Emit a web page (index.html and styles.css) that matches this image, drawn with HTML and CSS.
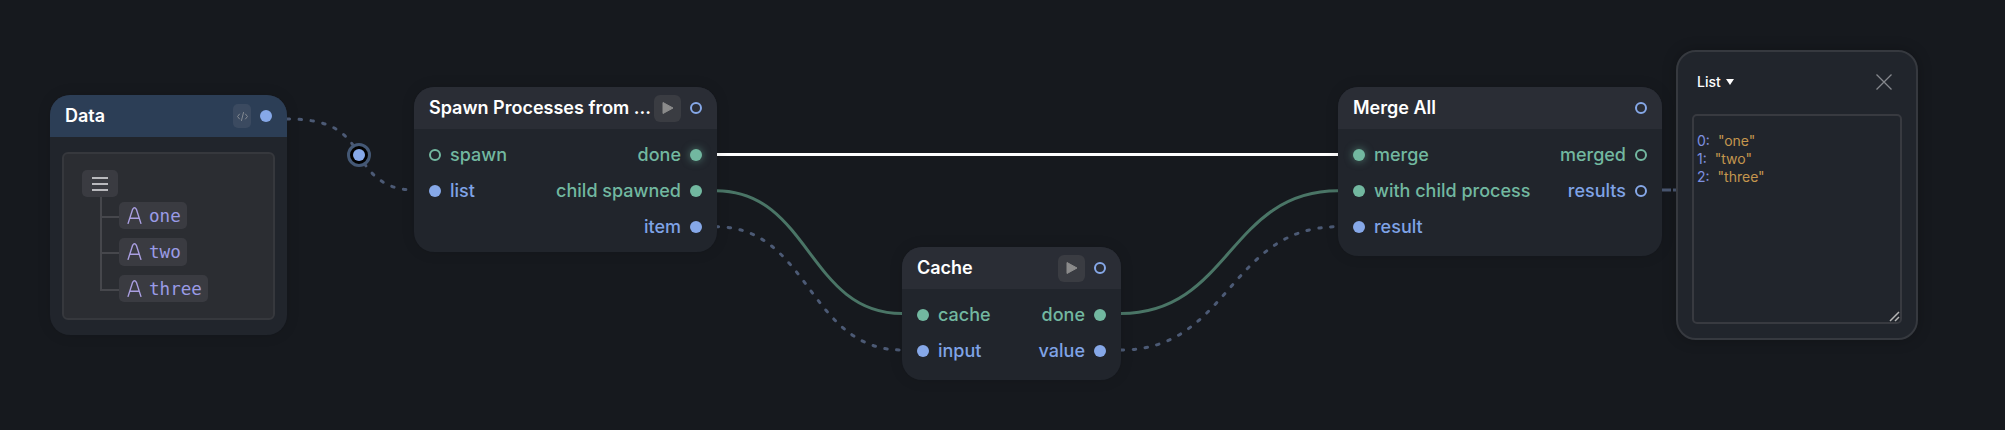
FILE: index.html
```html
<!DOCTYPE html>
<html lang="en">
<head>
<meta charset="utf-8">
<title>Graph</title>
<link rel="stylesheet" href="styles.css">
</head>
<body>
<main class="canvas">
  <svg class="wires" width="2005" height="430" viewBox="0 0 2005 430" fill="none">
    <path class="wire-data" d="M287 119C325 119 345 128 359 155C373 180 390 190 414 190"/>
    <path class="wire-exec" d="M716 154.500H1338"/>
    <path class="wire-green" d="M716 190.700C810 190.700 808 313.500 902 313.500"/>
    <path class="wire-data" d="M716 226.700C810 226.700 808 350 902 350"/>
    <path class="wire-green" d="M1121 313.500C1230 313.500 1229 190.700 1338 190.700"/>
    <path class="wire-data" d="M1121 350C1230 350 1229 226.700 1338 226.700"/>
    <path class="wire-solid" d="M1662 190H1676"/>
  </svg>

  <div class="reroute"><span class="reroute-dot"></span></div>

  <section class="node node-data">
    <header class="node-head head-blue">
      <h2 class="title">Data</h2>
      <button class="code-btn" type="button">
        <svg width="11" height="11" viewBox="0 0 10 10" fill="none"><path d="M2.500 2.500L.5 5l2 2.500M7.500 2.500l2 2.500-2 2.500M6 1L4 9" stroke="#8d9299" stroke-width=".8"/></svg>
      </button>
      <span class="port blue"></span>
    </header>
    <div class="data-body">
      <div class="tree-panel">
        <div class="chip root-chip">
          <svg width="16" height="14" viewBox="0 0 16 14" fill="none"><path d="M0 1h16M0 7h16M0 13h16" stroke="#e4e4e6" stroke-width="1.300"/></svg>
        </div>
        <ul class="tree">
          <li class="tree-row"><div class="chip str-chip"><svg class="a-icon" width="15" height="20" viewBox="0 0 16 20" fill="none"><path d="M1 19.500L6 4Q8 .5 10 4L15 19.500M3 13.500H13" stroke="#a99ee0" stroke-width="1.500"/></svg><span class="str">one</span></div></li>
          <li class="tree-row"><div class="chip str-chip tall"><svg class="a-icon" width="15" height="20" viewBox="0 0 16 20" fill="none"><path d="M1 19.500L6 4Q8 .5 10 4L15 19.500M3 13.500H13" stroke="#a99ee0" stroke-width="1.500"/></svg><span class="str">two</span></div></li>
          <li class="tree-row"><div class="chip str-chip"><svg class="a-icon" width="15" height="20" viewBox="0 0 16 20" fill="none"><path d="M1 19.500L6 4Q8 .5 10 4L15 19.500M3 13.500H13" stroke="#a99ee0" stroke-width="1.500"/></svg><span class="str">three</span></div></li>
        </ul>
      </div>
    </div>
  </section>

  <section class="node node-spawn">
    <header class="node-head">
      <h2 class="title">Spawn Processes from ...</h2>
      <button class="play-btn" type="button"><svg width="12" height="14" viewBox="0 0 12 14"><path d="M1 1.500V12.500L11 7Z" fill="#8b8b8b" stroke="#8b8b8b" stroke-width="1" stroke-linejoin="round"/></svg></button>
      <span class="port ring-blue"></span>
    </header>
    <div class="ports">
      <div class="col">
        <div class="row"><span class="port ring-green"></span><span class="lbl green-t">spawn</span></div>
        <div class="row"><span class="port blue"></span><span class="lbl blue-t">list</span></div>
      </div>
      <div class="col end">
        <div class="row"><span class="lbl green-t">done</span><span class="port green glow"></span></div>
        <div class="row"><span class="lbl green-t">child spawned</span><span class="port green"></span></div>
        <div class="row"><span class="lbl blue-t">item</span><span class="port blue"></span></div>
      </div>
    </div>
  </section>

  <section class="node node-cache">
    <header class="node-head">
      <h2 class="title">Cache</h2>
      <button class="play-btn" type="button"><svg width="12" height="14" viewBox="0 0 12 14"><path d="M1 1.500V12.500L11 7Z" fill="#8b8b8b" stroke="#8b8b8b" stroke-width="1" stroke-linejoin="round"/></svg></button>
      <span class="port ring-blue"></span>
    </header>
    <div class="ports">
      <div class="col">
        <div class="row"><span class="port green"></span><span class="lbl green-t">cache</span></div>
        <div class="row"><span class="port blue"></span><span class="lbl blue-t">input</span></div>
      </div>
      <div class="col end">
        <div class="row"><span class="lbl green-t">done</span><span class="port green"></span></div>
        <div class="row"><span class="lbl blue-t">value</span><span class="port blue"></span></div>
      </div>
    </div>
  </section>

  <section class="node node-merge">
    <header class="node-head">
      <h2 class="title">Merge All</h2>
      <span class="port ring-blue"></span>
    </header>
    <div class="ports">
      <div class="col">
        <div class="row"><span class="port green glow"></span><span class="lbl green-t">merge</span></div>
        <div class="row"><span class="port green"></span><span class="lbl green-t">with child process</span></div>
        <div class="row"><span class="port blue"></span><span class="lbl blue-t">result</span></div>
      </div>
      <div class="col end">
        <div class="row"><span class="lbl green-t">merged</span><span class="port ring-green"></span></div>
        <div class="row"><span class="lbl blue-t">results</span><span class="port ring-blue"></span></div>
      </div>
    </div>
  </section>

  <aside class="inspector">
    <header class="insp-head">
      <span class="insp-title">List</span>
      <span class="caret"></span>
      <svg class="close" width="16" height="16" viewBox="0 0 16 16" fill="none"><path d="M.5.500l15 15M15.500.5l-15 15" stroke="#85888d" stroke-width="1.300"/></svg>
    </header>
    <div class="insp-box">
      <div class="kv"><span class="k">0:</span><span class="v">"one"</span></div>
      <div class="kv"><span class="k">1:</span><span class="v">"two"</span></div>
      <div class="kv"><span class="k">2:</span><span class="v">"three"</span></div>
      <svg class="grip" width="11" height="11" viewBox="0 0 11 11" fill="none"><path d="M1 10L10 1M6 10L10 6" stroke="#b5b5b5" stroke-width="1.500"/></svg>
    </div>
  </aside>
</main>
</body>
</html>
```
FILE: styles.css
```css
* { box-sizing: border-box; }
html, body { margin: 0; padding: 0; background: #16191e; overflow: hidden; }
.canvas {
  position: relative;
  width: 2005px;
  height: 430px;
  background: #16191e;
  font-family: Inter, "Liberation Sans", sans-serif;
  color: #fff;
}
.wires { position: absolute; left: 0; top: 0; }
.wires path { stroke-width: 3px; }
.wire-data { stroke: #4c5a75; stroke-dasharray: 2.500 9.500; stroke-linecap: round; }
.wire-solid { stroke: #4c5a75; stroke-dasharray: 9 2 3 2; }
.wire-exec { stroke: #fff; }
.wire-green { stroke: #4a7566; }

.reroute {
  position: absolute;
  left: 347px;
  top: 143px;
  width: 24px;
  height: 24px;
  border-radius: 50%;
  background: #000;
  border: 3px solid #445875;
  display: flex;
  align-items: center;
  justify-content: center;
}
.reroute-dot { flex: none; width: 12px; height: 12px; border-radius: 50%; background: #86a8e8; }

.node {
  position: absolute;
  background: #21252c;
  border-radius: 20px;
  overflow: hidden;
  box-shadow: 0 0 14px rgba(0, 0, 0, .12);
}
.node-data { left: 50px; top: 95px; width: 237px; height: 240px; }
.node-spawn { left: 414px; top: 87px; width: 303px; height: 165px; }
.node-cache { left: 902px; top: 247px; width: 219px; height: 133px; }
.node-merge { left: 1338px; top: 87px; width: 324px; height: 169px; }

.node-head {
  height: 42px;
  background: #2a2d35;
  display: flex;
  align-items: center;
  gap: 9px;
  padding: 0 15px;
}
.head-blue { background: #2c3e56; }
.title {
  flex: 1;
  min-width: 0;
  margin: 0;
  font-size: 18px;
  line-height: 42px;
  font-weight: 600;
  color: #fff;
  white-space: nowrap;
}
.port {
  flex: none;
  width: 12px;
  height: 12px;
  border-radius: 50%;
}
.blue { background: #86a8e8; }
.green { background: #72b8a0; }
.ring-blue { border: 2px solid #86a8e8; }
.ring-green { border: 2px solid #72b8a0; }
.glow { box-shadow: 0 0 8px rgba(114, 184, 160, .6); }

.play-btn {
  flex: none;
  width: 27px;
  height: 27px;
  padding: 0;
  border: 0;
  border-radius: 6px;
  background: #3a3c42;
  display: flex;
  align-items: center;
  justify-content: center;
}
.code-btn {
  flex: none;
  width: 18px;
  height: 24px;
  padding: 0;
  border: 0;
  border-radius: 5px;
  background: #3b4a60;
  display: flex;
  align-items: center;
  justify-content: center;
}

.ports {
  display: flex;
  justify-content: space-between;
  padding: 8px 15px 0;
}
.col { display: flex; flex-direction: column; }
.col.end { align-items: flex-end; }
.row { height: 36px; display: flex; align-items: center; gap: 9px; }
.lbl { font-size: 18px; font-weight: 500; line-height: 36px; white-space: nowrap; }
.green-t { color: #72b8a0; }
.blue-t { color: #7fa3e6; }

.data-body { padding: 15px 12px; }
.tree-panel {
  height: 168px;
  background: #2b2d32;
  border: 2px solid #36383d;
  border-radius: 6px;
  padding: 16px 18px;
}
.chip {
  background: #3a3b41;
  border-radius: 5px;
  display: flex;
  align-items: center;
}
.root-chip { width: 36px; height: 27px; justify-content: center; }
.tree {
  list-style: none;
  margin: 0 0 0 18px;
  padding: 0;
  position: relative;
  display: flex;
  flex-direction: column;
  gap: 9px;
  padding-top: 5px;
}
.tree::before {
  content: "";
  position: absolute;
  left: 0;
  top: 0;
  bottom: 13px;
  border-left: 2px solid #46474c;
}
.tree-row { display: flex; align-items: center; padding-left: 19px; position: relative; }
.tree-row::before {
  content: "";
  position: absolute;
  left: 0;
  top: 50%;
  width: 19px;
  border-top: 2px solid #46474c;
}
.str-chip { height: 27px; padding: 0 6px 0 8px; gap: 7px; }
.str-chip.tall { height: 28px; }
.a-icon { flex: none; margin-top: -2px; }
.str { font-family: "DejaVu Sans Mono", "Liberation Mono", monospace; font-size: 17.600px; color: #9a9be6; line-height: 20px; }

.inspector {
  position: absolute;
  left: 1676px;
  top: 50px;
  width: 242px;
  height: 290px;
  background: #21252c;
  border: 2px solid #36393f;
  border-radius: 20px;
  padding: 0 14px;
  box-shadow: 0 0 14px rgba(0, 0, 0, .25);
}
.insp-head { height: 59px; margin-bottom: 3px; display: flex; align-items: center; gap: 5px; padding-left: 5px; }
.insp-title { font-size: 14px; font-weight: 500; color: #fff; }
.caret {
  width: 0;
  height: 0;
  border-style: solid;
  border-width: 6px 4.500px 0 4.500px;
  border-color: #fff transparent transparent transparent;
}
.close { margin-left: auto; margin-right: 10px; }
.insp-box {
  position: relative;
  width: 210px;
  height: 210px;
  border: 2px solid #383a40;
  border-radius: 5px;
  padding: 16px 3px;
}
.kv { display: flex; gap: 8px; font-size: 14px; line-height: 18px; }
.k { color: #7e90e0; }
.v { color: #c4964e; }
.grip { position: absolute; right: 0; bottom: 0; }
```
